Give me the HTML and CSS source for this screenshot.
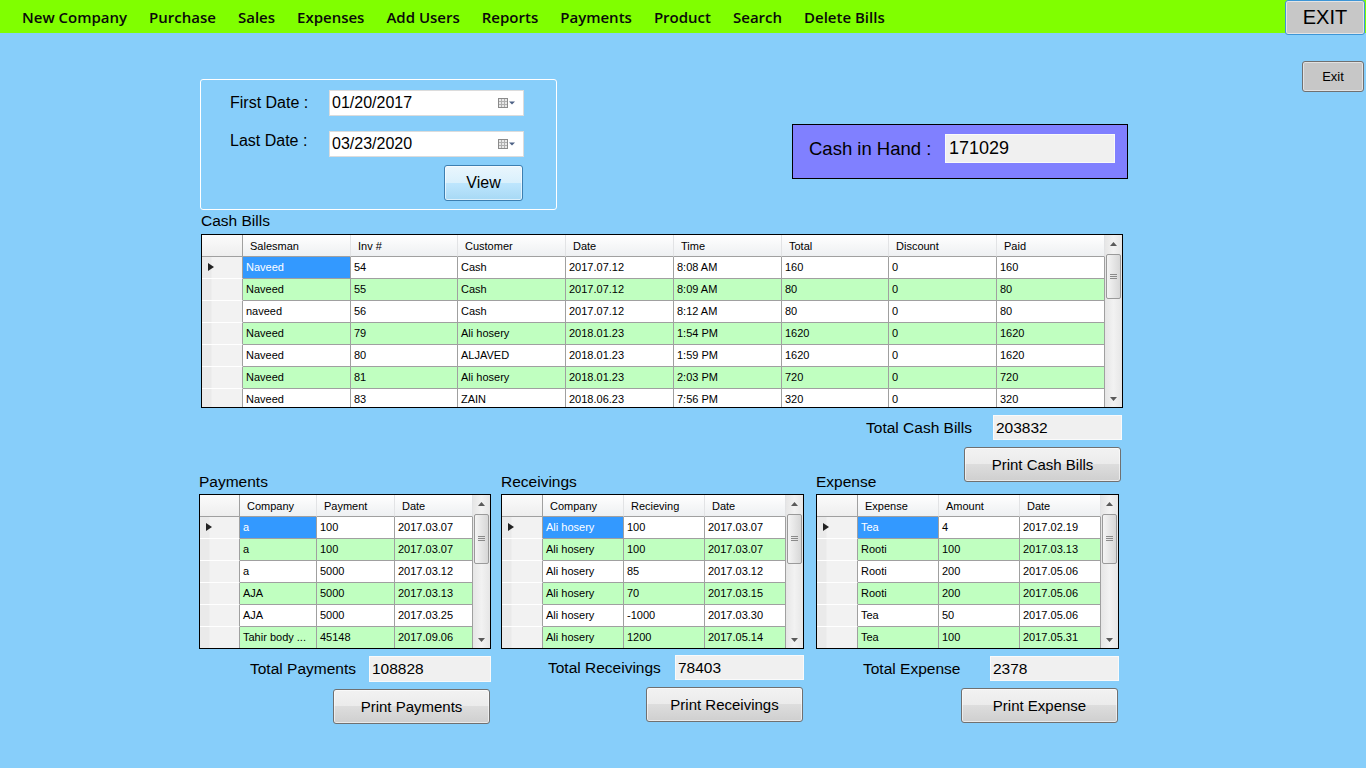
FILE: index.html
```html
<!DOCTYPE html>
<html lang="en">
<head>
<meta charset="utf-8">
<title>Cash Report</title>
<link rel="stylesheet" href="styles.css">
</head>
<body>
<header class="menubar">
  <nav class="menu">
    <span class="menu-item">New Company</span>
    <span class="menu-item">Purchase</span>
    <span class="menu-item">Sales</span>
    <span class="menu-item">Expenses</span>
    <span class="menu-item">Add Users</span>
    <span class="menu-item">Reports</span>
    <span class="menu-item">Payments</span>
    <span class="menu-item">Product</span>
    <span class="menu-item">Search</span>
    <span class="menu-item">Delete Bills</span>
  </nav>
  <button class="exit-big">EXIT</button>
</header>

<main class="form">
  <div class="top">
    <div class="date-group">
      <label class="dg-label">First Date :</label>
      <div class="datebox"><span>01/20/2017</span><svg class="cal" width="18" height="10" viewBox="0 0 18 10"><rect x="0.5" y="0.5" width="9" height="9" fill="#e8e8e8" stroke="#8a8a8a"/><path d="M3.5 1v8M6.5 1v8M1 3.5h8M1 6.5h8" stroke="#b0b0b0" stroke-width="1"/><path d="M11 3.5h6l-3 3z" fill="#4d6185"/></svg></div>
      <label class="dg-label dg-label2">Last Date :</label>
      <div class="datebox"><span>03/23/2020</span><svg class="cal" width="18" height="10" viewBox="0 0 18 10"><rect x="0.5" y="0.5" width="9" height="9" fill="#e8e8e8" stroke="#8a8a8a"/><path d="M3.5 1v8M6.5 1v8M1 3.5h8M1 6.5h8" stroke="#b0b0b0" stroke-width="1"/><path d="M11 3.5h6l-3 3z" fill="#4d6185"/></svg></div>
      <button class="btn-view">View</button>
    </div>
    <div class="cash-hand">
      <span class="ch-label">Cash in Hand :</span>
      <div class="ch-box">171029</div>
    </div>
    <button class="btn-exit">Exit</button>
  </div>

  <section class="cash-bills">
    <div class="caption">Cash Bills</div>
    <div class="dgv dgv-cash">
      <div class="dgv-body">
        <div class="r hr"><div class="hc corner"></div><div class="hc">Salesman</div><div class="hc">Inv #</div><div class="hc">Customer</div><div class="hc">Date</div><div class="hc">Time</div><div class="hc">Total</div><div class="hc">Discount</div><div class="hc">Paid</div></div>
        <div class="r"><div class="rh cur"></div><div class="c sel">Naveed</div><div class="c">54</div><div class="c">Cash</div><div class="c">2017.07.12</div><div class="c">8:08 AM</div><div class="c">160</div><div class="c">0</div><div class="c">160</div></div>
        <div class="r g"><div class="rh"></div><div class="c">Naveed</div><div class="c">55</div><div class="c">Cash</div><div class="c">2017.07.12</div><div class="c">8:09 AM</div><div class="c">80</div><div class="c">0</div><div class="c">80</div></div>
        <div class="r"><div class="rh"></div><div class="c">naveed</div><div class="c">56</div><div class="c">Cash</div><div class="c">2017.07.12</div><div class="c">8:12 AM</div><div class="c">80</div><div class="c">0</div><div class="c">80</div></div>
        <div class="r g"><div class="rh"></div><div class="c">Naveed</div><div class="c">79</div><div class="c">Ali hosery</div><div class="c">2018.01.23</div><div class="c">1:54 PM</div><div class="c">1620</div><div class="c">0</div><div class="c">1620</div></div>
        <div class="r"><div class="rh"></div><div class="c">Naveed</div><div class="c">80</div><div class="c">ALJAVED</div><div class="c">2018.01.23</div><div class="c">1:59 PM</div><div class="c">1620</div><div class="c">0</div><div class="c">1620</div></div>
        <div class="r g"><div class="rh"></div><div class="c">Naveed</div><div class="c">81</div><div class="c">Ali hosery</div><div class="c">2018.01.23</div><div class="c">2:03 PM</div><div class="c">720</div><div class="c">0</div><div class="c">720</div></div>
        <div class="r"><div class="rh"></div><div class="c">Naveed</div><div class="c">83</div><div class="c">ZAIN</div><div class="c">2018.06.23</div><div class="c">7:56 PM</div><div class="c">320</div><div class="c">0</div><div class="c">320</div></div>
      </div>
      <div class="vscroll">
        <div class="arrow"><svg width="7" height="4" viewBox="0 0 7 4"><path d="M0 4L3.5 0L7 4z" fill="#5a5a5a"/></svg></div>
        <div class="thumb thumb-cash"><svg width="7" height="6" viewBox="0 0 7 6"><path d="M0 .5h7M0 2.5h7M0 4.5h7" stroke="#8a8a8a"/></svg></div>
        <div class="track"></div>
        <div class="arrow"><svg width="7" height="4" viewBox="0 0 7 4"><path d="M0 0L3.5 4L7 0z" fill="#5a5a5a"/></svg></div>
      </div>
    </div>
    <div class="cash-foot">
      <div class="total-row total-cash">
        <span class="t-label">Total Cash Bills</span>
        <div class="t-box t-box-cash">203832</div>
      </div>
      <button class="btn print print-cash">Print Cash Bills</button>
    </div>
  </section>

  <div class="bottom">
    <section class="panel panel-pay">
      <div class="caption">Payments</div>
      <div class="dgv dgv-small dgv-pay">
        <div class="dgv-body">
          <div class="r hr"><div class="hc corner"></div><div class="hc">Company</div><div class="hc">Payment</div><div class="hc">Date</div></div>
          <div class="r"><div class="rh cur"></div><div class="c sel">a</div><div class="c">100</div><div class="c">2017.03.07</div></div>
          <div class="r g"><div class="rh"></div><div class="c">a</div><div class="c">100</div><div class="c">2017.03.07</div></div>
          <div class="r"><div class="rh"></div><div class="c">a</div><div class="c">5000</div><div class="c">2017.03.12</div></div>
          <div class="r g"><div class="rh"></div><div class="c">AJA</div><div class="c">5000</div><div class="c">2017.03.13</div></div>
          <div class="r"><div class="rh"></div><div class="c">AJA</div><div class="c">5000</div><div class="c">2017.03.25</div></div>
          <div class="r g"><div class="rh"></div><div class="c">Tahir body ...</div><div class="c">45148</div><div class="c">2017.09.06</div></div>
        </div>
        <div class="vscroll">
          <div class="arrow"><svg width="7" height="4" viewBox="0 0 7 4"><path d="M0 4L3.5 0L7 4z" fill="#5a5a5a"/></svg></div>
          <div class="thumb thumb-small"><svg width="7" height="6" viewBox="0 0 7 6"><path d="M0 .5h7M0 2.5h7M0 4.5h7" stroke="#8a8a8a"/></svg></div>
          <div class="track"></div>
          <div class="arrow"><svg width="7" height="4" viewBox="0 0 7 4"><path d="M0 0L3.5 4L7 0z" fill="#5a5a5a"/></svg></div>
        </div>
      </div>
      <div class="total-row">
        <span class="t-label tl-pay">Total Payments</span>
        <div class="t-box t-box-pay">108828</div>
      </div>
      <button class="btn print">Print Payments</button>
    </section>

    <section class="panel panel-rec">
      <div class="caption">Receivings</div>
      <div class="dgv dgv-small dgv-rec">
        <div class="dgv-body">
          <div class="r hr"><div class="hc corner"></div><div class="hc">Company</div><div class="hc">Recieving</div><div class="hc">Date</div></div>
          <div class="r"><div class="rh cur"></div><div class="c sel">Ali hosery</div><div class="c">100</div><div class="c">2017.03.07</div></div>
          <div class="r g"><div class="rh"></div><div class="c">Ali hosery</div><div class="c">100</div><div class="c">2017.03.07</div></div>
          <div class="r"><div class="rh"></div><div class="c">Ali hosery</div><div class="c">85</div><div class="c">2017.03.12</div></div>
          <div class="r g"><div class="rh"></div><div class="c">Ali hosery</div><div class="c">70</div><div class="c">2017.03.15</div></div>
          <div class="r"><div class="rh"></div><div class="c">Ali hosery</div><div class="c">-1000</div><div class="c">2017.03.30</div></div>
          <div class="r g"><div class="rh"></div><div class="c">Ali hosery</div><div class="c">1200</div><div class="c">2017.05.14</div></div>
        </div>
        <div class="vscroll">
          <div class="arrow"><svg width="7" height="4" viewBox="0 0 7 4"><path d="M0 4L3.5 0L7 4z" fill="#5a5a5a"/></svg></div>
          <div class="thumb thumb-small"><svg width="7" height="6" viewBox="0 0 7 6"><path d="M0 .5h7M0 2.5h7M0 4.5h7" stroke="#8a8a8a"/></svg></div>
          <div class="track"></div>
          <div class="arrow"><svg width="7" height="4" viewBox="0 0 7 4"><path d="M0 0L3.5 4L7 0z" fill="#5a5a5a"/></svg></div>
        </div>
      </div>
      <div class="total-row total-rec">
        <span class="t-label tl-rec">Total Receivings</span>
        <div class="t-box t-box-wide">78403</div>
      </div>
      <button class="btn print">Print Receivings</button>
    </section>

    <section class="panel panel-exp">
      <div class="caption">Expense</div>
      <div class="dgv dgv-small dgv-exp">
        <div class="dgv-body">
          <div class="r hr"><div class="hc corner"></div><div class="hc">Expense</div><div class="hc">Amount</div><div class="hc">Date</div></div>
          <div class="r"><div class="rh cur"></div><div class="c sel">Tea</div><div class="c">4</div><div class="c">2017.02.19</div></div>
          <div class="r g"><div class="rh"></div><div class="c">Rooti</div><div class="c">100</div><div class="c">2017.03.13</div></div>
          <div class="r"><div class="rh"></div><div class="c">Rooti</div><div class="c">200</div><div class="c">2017.05.06</div></div>
          <div class="r g"><div class="rh"></div><div class="c">Rooti</div><div class="c">200</div><div class="c">2017.05.06</div></div>
          <div class="r"><div class="rh"></div><div class="c">Tea</div><div class="c">50</div><div class="c">2017.05.06</div></div>
          <div class="r g"><div class="rh"></div><div class="c">Tea</div><div class="c">100</div><div class="c">2017.05.31</div></div>
        </div>
        <div class="vscroll">
          <div class="arrow"><svg width="7" height="4" viewBox="0 0 7 4"><path d="M0 4L3.5 0L7 4z" fill="#5a5a5a"/></svg></div>
          <div class="thumb thumb-small"><svg width="7" height="6" viewBox="0 0 7 6"><path d="M0 .5h7M0 2.5h7M0 4.5h7" stroke="#8a8a8a"/></svg></div>
          <div class="track"></div>
          <div class="arrow"><svg width="7" height="4" viewBox="0 0 7 4"><path d="M0 0L3.5 4L7 0z" fill="#5a5a5a"/></svg></div>
        </div>
      </div>
      <div class="total-row">
        <span class="t-label tl-exp">Total Expense</span>
        <div class="t-box t-box-wide">2378</div>
      </div>
      <button class="btn print">Print Expense</button>
    </section>
  </div>
</main>
</body>
</html>
```

FILE: styles.css
```css
* { box-sizing: border-box; }

body {
  margin: 0;
  width: 1366px;
  height: 768px;
  overflow: hidden;
  background: #87cefa;
  color: #000;
  font-family: "Liberation Sans", Arial, sans-serif;
}

button { font-family: "Liberation Sans", Arial, sans-serif; color: #000; padding: 0; cursor: default; }

/* ---------- menu bar ---------- */
.menubar {
  display: flex;
  height: 33px;
  background: #80ff00;
}
.menu {
  display: flex;
  align-items: center;
  padding-left: 11px;
  font-family: "Open Sans", "Noto Sans", sans-serif;
  font-size: 15px;
  font-weight: 600;
}
.menu-item { padding: 1px 11px 0; line-height: 33px; color: #0a0a0a; }

.exit-big {
  margin-left: auto;
  margin-right: 1px;
  width: 80px;
  height: 35px;
  align-self: flex-start;
  background: #c7c7c7;
  border: 1px solid #3d95d6;
  border-radius: 3px;
  box-shadow: inset 0 0 0 1px #e4e4e4;
  font-size: 20px;
  position: relative;
  z-index: 1;
}

/* ---------- top area ---------- */
.top {
  display: flex;
  align-items: flex-start;
  padding: 28px 2px 0 200px;
}

.date-group {
  margin-top: 18px;
  width: 357px;
  height: 131px;
  border: 1px solid #fff;
  border-radius: 3px;
  display: grid;
  grid-template-columns: 99px 195px;
  grid-template-rows: 26px 26px 36px;
  row-gap: 15px;
  padding: 10px 0 0 29px;
}
.date-group .btn-view { margin-top: -7px; }
.dg-label { align-self: center; font-size: 16px; }
.dg-label2 { margin-bottom: 6px; }

.datebox {
  background: #fff;
  border: 1px solid #dcdcdc;
  display: flex;
  align-items: center;
  justify-content: space-between;
  padding: 0 7px 0 2px;
  font-size: 16px;
}
.cal { display: block; }

.btn-view {
  grid-column: 2;
  justify-self: end;
  margin-right: 1px;
  width: 79px;
  height: 36px;
  font-size: 16px;
  border: 1px solid #3c7fb1;
  border-radius: 3px;
  background: linear-gradient(#eaf6fd 0%, #d9f0fc 50%, #bee6fd 50%, #a7d9f5 100%);
  box-shadow: inset 0 0 0 1px rgba(255,255,255,.6);
}

.cash-hand {
  margin: 63px 0 0 235px;
  width: 336px;
  height: 55px;
  background: #8080ff;
  border: 1px solid #000;
  display: flex;
  align-items: flex-start;
  justify-content: space-between;
  padding: 9px 12px 0 16px;
}
.ch-label { font-size: 18.5px; line-height: 29px; }
.ch-box {
  width: 170px;
  height: 29px;
  background: #f0f0f0;
  border: 1px solid #fafafa;
  font-size: 18px;
  line-height: 27px;
  padding-left: 3px;
}

.btn-exit {
  margin-left: auto;
  width: 62px;
  height: 31px;
  font-size: 13px;
  background: #c7c7c7;
  border: 1px solid #707070;
  border-radius: 3px;
  box-shadow: inset 0 0 0 1px #e2e2e2;
}

/* ---------- cash bills ---------- */
.cash-bills {
  margin-left: 201px;
  width: 922px;
}
.caption {
  height: 24px;
  font-size: 15.5px;
  line-height: 22px;
}
.panel .caption { height: 22px; line-height: 20px; }

.dgv {
  display: flex;
  border: 1px solid #000;
  background: #fff;
  overflow: hidden;
}
.dgv-cash { height: 174px; }
.dgv-small { height: 155px; }

.dgv-body { flex: 1; overflow: hidden; }

.r { display: grid; }
.dgv-cash .r { grid-template-columns: 41px 108px 107px 108px 108px 108px 107px 108px 108px; }
.dgv-pay .r { grid-template-columns: 40px 77px 78px 78px; }
.dgv-rec .r, .dgv-exp .r { grid-template-columns: 41px 81px 81px 81px; }

.hc, .c, .rh { height: 22px; }

.hc {
  background: linear-gradient(#ffffff 0%, #f7f8f9 45%, #eef0f2 100%);
  border-right: 1px solid #e2e3e5;
  border-bottom: 1px solid #a0a0a0;
  font-size: 11px;
  line-height: 22px;
  padding-left: 7px;
  white-space: nowrap;
  overflow: hidden;
}
.hc.corner { border-right: 1px solid #a0a0a0; background: linear-gradient(#fbfbfb, #eeeeee); }

.rh {
  background: linear-gradient(to right, #eaeaea 0, #eaeaea 9px, #f2f2f2 10px, #f2f2f2 100%);
  border-right: 1px solid #a0a0a0;
  border-bottom: 1px solid #ffffff;
  position: relative;
}
.rh.cur::after {
  content: "";
  position: absolute;
  left: 6px;
  top: 6px;
  border-left: 6px solid #222;
  border-top: 4.5px solid transparent;
  border-bottom: 4.5px solid transparent;
}

.c {
  border-right: 1px solid #a0a0a0;
  border-bottom: 1px solid #a0a0a0;
  font-size: 11px;
  line-height: 21px;
  padding-left: 3px;
  white-space: nowrap;
  overflow: hidden;
  background: #fff;
}
.r.g .c { background: #c0ffc0; }
.c.sel { background: #3399ff !important; color: #fff; }

/* scrollbar */
.vscroll {
  width: 17px;
  flex: none;
  display: flex;
  flex-direction: column;
  background: linear-gradient(to right, #e6e6e6, #f2f2f2 50%, #e6e6e6);
}
.arrow {
  height: 17px;
  display: flex;
  align-items: center;
  justify-content: center;
  flex: none;
}
.thumb {
  margin: 2px 1px 0;
  border: 1px solid #9a9a9a;
  border-radius: 2px;
  background: linear-gradient(to right, #f4f4f4, #e6e6e6 50%, #d7d7d7);
  display: flex;
  align-items: center;
  justify-content: center;
  flex: none;
}
.thumb-cash { height: 45px; }
.thumb-small { height: 50px; }
.track { flex: 1; }

/* ---------- totals ---------- */
.total-row {
  display: flex;
  align-items: center;
  margin-top: 7px;
}
.total-cash { justify-content: flex-end; margin-right: 1px; }
.t-label { font-size: 15.5px; }
.total-cash .t-label { margin-right: 21px; }
.tl-pay { margin-left: 51px; }
.tl-rec { margin-left: 47px; }
.tl-exp { margin-left: 47px; }
.total-row .t-box { margin-left: auto; }
.total-cash .t-box { margin-left: 0; }

.t-box {
  height: 25px;
  background: #f0f0f0;
  border: 1px solid #fafafa;
  font-size: 15.5px;
  line-height: 23px;
  padding-left: 2px;
}
.t-box-cash { width: 129px; }
.t-box-pay { width: 122px; height: 26px; }
.t-box-wide { width: 129px; }
.total-rec { margin-top: 6px; }

.btn {
  display: block;
  width: 157px;
  height: 35px;
  font-size: 15px;
  border: 1px solid #707070;
  border-radius: 3px;
  background: linear-gradient(#f2f2f2 0%, #ebebeb 50%, #dddddd 50%, #cfcfcf 100%);
  box-shadow: inset 0 0 0 1px rgba(255,255,255,.55);
}
.print { margin: 7px 1px 0 auto; }
.print-cash { margin: 7px 2px -10px auto; }

/* ---------- bottom ---------- */
.bottom {
  display: flex;
  align-items: flex-start;
  padding-left: 199px;
}
.panel-pay { width: 292px; }
.panel-rec { width: 303px; margin-left: 10px; }
.panel-exp { width: 303px; margin-left: 12px; }
```
